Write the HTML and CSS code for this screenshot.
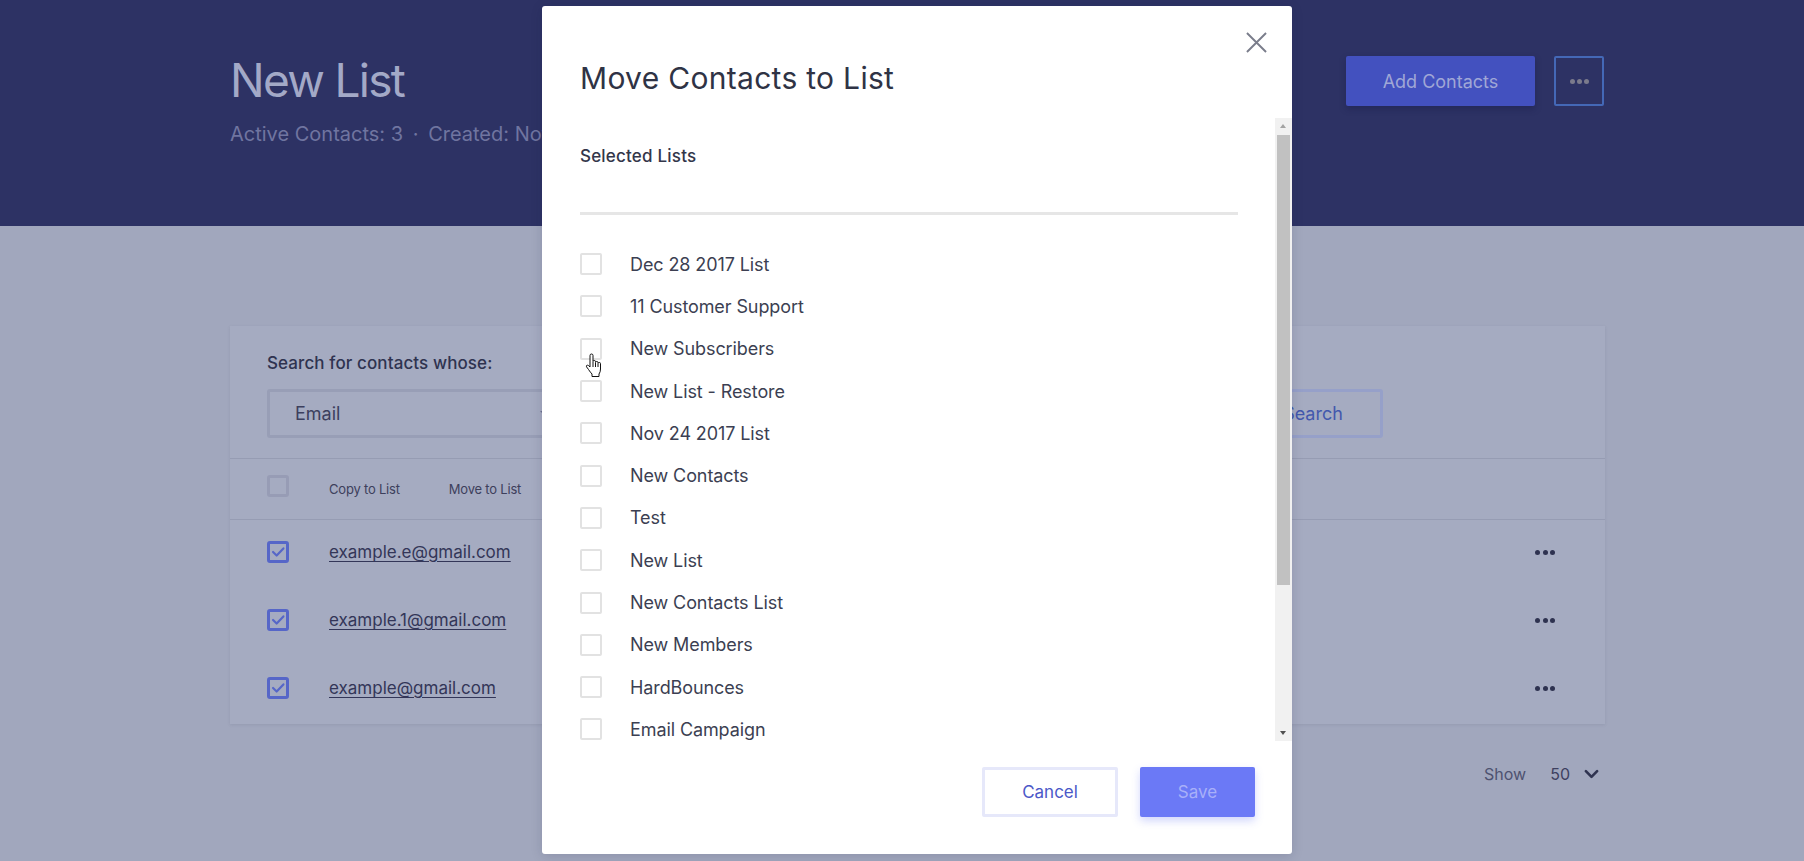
FILE: index.html
```html
<!DOCTYPE html>
<html lang="en">
<head>
<meta charset="utf-8">
<title>New List</title>
<link rel="stylesheet" href="styles.css">
</head>
<body>
<div class="page">
  <header class="hero">
    <div class="hero-inner">
      <div class="hero-text">
        <h1 class="hero-title">New List</h1>
        <div class="hero-meta">Active Contacts: 3 <span class="sep">·</span> Created: Nov 24 2017</div>
      </div>
      <div class="hero-actions">
        <button class="btn-add">Add Contacts</button>
        <button class="btn-more"><span class="dot"></span><span class="dot"></span><span class="dot"></span></button>
      </div>
    </div>
  </header>

  <main class="content">
    <section class="card">
      <div class="search">
        <div class="search-label">Search for contacts whose:</div>
        <div class="search-row">
          <div class="select">Email<span class="select-arrow"></span></div>
          <div class="search-input"></div>
          <button class="btn-search">Search</button>
        </div>
      </div>
      <div class="table-head">
        <span class="cb"></span>
        <span class="head-action">Copy to List</span>
        <span class="head-action">Move to List</span>
      </div>
      <div class="row">
        <span class="cb cb-checked"><svg viewBox="0 0 20 20" class="tick"><path d="M4.5 10l4 4L16 6"/></svg></span>
        <a class="email">example.e@gmail.com</a>
        <span class="row-dots"><i></i><i></i><i></i></span>
      </div>
      <div class="row">
        <span class="cb cb-checked"><svg viewBox="0 0 20 20" class="tick"><path d="M4.5 10l4 4L16 6"/></svg></span>
        <a class="email">example.1@gmail.com</a>
        <span class="row-dots"><i></i><i></i><i></i></span>
      </div>
      <div class="row">
        <span class="cb cb-checked"><svg viewBox="0 0 20 20" class="tick"><path d="M4.5 10l4 4L16 6"/></svg></span>
        <a class="email">example@gmail.com</a>
        <span class="row-dots"><i></i><i></i><i></i></span>
      </div>
    </section>
    <div class="pager">
      <span class="pager-show">Show</span>
      <span class="pager-num">50</span>
      <svg class="pager-chev" viewBox="0 0 16 10"><path d="M2 2l6 6 6-6"/></svg>
    </div>
  </main>
</div>

<div class="modal">
  <button class="modal-close"><svg viewBox="0 0 22 22"><path d="M1 1l20 20M21 1L1 21"/></svg></button>
  <h2 class="modal-title">Move Contacts to List</h2>
  <div class="modal-scroll">
    <div class="modal-body">
      <div class="selected-label">Selected Lists</div>
      <div class="selected-field"></div>
      <ul class="lists">
        <li><span class="mcb"></span>Dec 28 2017 List</li>
        <li><span class="mcb"></span>11 Customer Support</li>
        <li><span class="mcb"></span>New Subscribers</li>
        <li><span class="mcb"></span>New List - Restore</li>
        <li><span class="mcb"></span>Nov 24 2017 List</li>
        <li><span class="mcb"></span>New Contacts</li>
        <li><span class="mcb"></span>Test</li>
        <li><span class="mcb"></span>New List</li>
        <li><span class="mcb"></span>New Contacts List</li>
        <li><span class="mcb"></span>New Members</li>
        <li><span class="mcb"></span>HardBounces</li>
        <li><span class="mcb"></span>Email Campaign</li>
      </ul>
    </div>
    <div class="scrollbar">
      <span class="sb-up"></span>
      <span class="sb-thumb"></span>
      <span class="sb-track"></span>
      <span class="sb-down"></span>
    </div>
  </div>
  <div class="modal-footer">
    <button class="btn-cancel">Cancel</button>
    <button class="btn-save">Save</button>
  </div>
</div>

<svg class="cursor" viewBox="0 0 18 25"><path d="M5 2.5Q5 1 6.5 1Q8 1 8 2.5V8.5Q8 7.5 9.25 7.5Q10.5 7.5 10.5 8.5V9.5Q10.5 8.5 11.75 8.5Q13 8.5 13 9.5V10.5Q13 9.5 14.25 9.5Q15.5 9.5 15.5 10.5V16Q15.5 19 14 21V23.5H7V21Q5.5 19.5 3.5 16.5L1.5 13.8Q1 12.2 2.5 12.2Q3.6 12.2 5 14Z M10.5 10V14 M13 11V14 M8 9V14"/></svg>
</body>
</html>
```

FILE: styles.css
```css
* { box-sizing: border-box; }
html, body { margin: 0; padding: 0; }
body {
  width: 1804px;
  height: 861px;
  overflow: hidden;
  background: #a1a7bd;
  font-family: Inter, "Noto Sans", sans-serif;
  position: relative;
}
button { font-family: inherit; cursor: pointer; }

/* ---------- hero ---------- */
.hero {
  height: 226px;
  background: #2d3264;
}
.hero-inner {
  margin-left: 230px;
  width: 1375px;
  padding-top: 56px;
  display: flex;
  justify-content: space-between;
  align-items: flex-start;
}
.hero-title {
  margin: 1px 0 0 0;
  font-size: 46px;
  line-height: 46px;
  font-weight: 400;
  color: #a3a9c7;
  letter-spacing: -1.7px;
}
.hero-meta {
  margin-top: 19px;
  font-size: 20px;
  line-height: 24px;
  color: #7075a0;
}
.hero-meta .sep { margin: 0 4px; }
.hero-actions {
  display: flex;
  gap: 19px;
  margin-right: 1px;
}
.btn-add {
  width: 189px;
  height: 50px;
  border: none;
  border-radius: 2px;
  background: #4351bf;
  color: #a0a7d6;
  font-size: 18px;
  box-shadow: 0 3px 6px rgba(20, 24, 70, 0.35);
}
.btn-more {
  width: 50px;
  height: 50px;
  border: 2px solid #4468b6;
  border-radius: 2px;
  background: transparent;
  display: flex;
  align-items: center;
  justify-content: center;
  gap: 2px;
  padding: 0;
}
.btn-more .dot {
  width: 5px;
  height: 5px;
  border-radius: 50%;
  background: #7b7b8c;
}

/* ---------- content ---------- */
.content {
  margin-left: 230px;
  width: 1375px;
  padding-top: 100px;
}
.card {
  background: #a5abc1;
  box-shadow: 0 1px 3px rgba(60, 66, 100, 0.12);
}
.search {
  padding: 27px 37px 20px;
  border-bottom: 1px solid #969cb3;
}
.search-label {
  font-size: 17px;
  line-height: 20px;
  font-weight: 500;
  color: #2f3350;
  letter-spacing: 0.1px;
}
.search-row {
  margin-top: 16px;
  width: 1116px;
  display: flex;
  gap: 20px;
}
.select {
  width: 330px;
  height: 49px;
  border: 3px solid #989eb6;
  border-radius: 3px;
  padding-left: 25px;
  display: flex;
  align-items: center;
  font-size: 18px;
  color: #3c3f5e;
  position: relative;
}
.select-arrow {
  position: absolute;
  left: 270px;
  top: 19px;
  border-left: 5px solid transparent;
  border-right: 5px solid transparent;
  border-top: 5px solid #6e7290;
}
.search-input {
  flex: 1;
  height: 49px;
  border: 3px solid #989eb6;
  border-radius: 3px;
}
.btn-search {
  width: 140px;
  height: 49px;
  border: 3px solid #96a0c9;
  border-radius: 3px;
  background: transparent;
  color: #4358ad;
  font-size: 18px;
}
.table-head {
  height: 61px;
  padding: 0 37px;
  display: flex;
  align-items: center;
  border-bottom: 1px solid #969cb3;
}
.cb {
  width: 22px;
  height: 22px;
  border: 3px solid #979cb5;
  border-radius: 3px;
  flex: none;
  margin-right: 40px;
  margin-top: -6px;
}
.head-action {
  font-size: 13px;
  color: #3d405c;
  margin-right: 49px;
  letter-spacing: -0.2px;
}
.row {
  height: 68px;
  padding: 0 50px 0 37px;
  display: flex;
  align-items: center;
}
.row .cb { margin-top: -4px; }
.cb-checked {
  border-color: #5666c8;
  display: flex;
  align-items: center;
  justify-content: center;
}
.tick {
  width: 18px;
  height: 18px;
  flex: none;
  fill: none;
  stroke: #5666c8;
  stroke-width: 2.4;
  stroke-linecap: round;
  stroke-linejoin: round;
}
.email {
  font-size: 17px;
  color: #333658;
  text-decoration: underline;
  text-underline-offset: 3px;
  margin-top: -4px;
}
.row-dots {
  margin-left: auto;
  display: flex;
  gap: 2.5px;
  margin-top: -4px;
}
.row-dots i {
  width: 5px;
  height: 5px;
  border-radius: 50%;
  background: #2e3250;
}
.pager {
  margin-top: 40px;
  display: flex;
  justify-content: flex-end;
  align-items: center;
  padding-right: 6px;
  height: 20px;
}
.pager-show { font-size: 16px; color: #4e5270; }
.pager-num { font-size: 16px; color: #3d4060; margin-left: 24px; }
.pager-chev {
  width: 15px;
  height: 10px;
  margin-left: 14px;
  fill: none;
  stroke: #2f3350;
  stroke-width: 2.8;
  stroke-linecap: round;
  stroke-linejoin: round;
}

/* ---------- modal ---------- */
.modal {
  position: absolute;
  left: 542px;
  top: 6px;
  width: 750px;
  height: 848px;
  background: #ffffff;
  border-radius: 3px;
  display: flex;
  flex-direction: column;
  box-shadow: 0 2px 12px rgba(20, 24, 60, 0.15);
}
.modal-close {
  position: absolute;
  left: 704px;
  top: 26px;
  width: 21px;
  height: 21px;
  padding: 0;
  border: none;
  background: transparent;
}
.modal-close svg {
  display: block;
  width: 21px;
  height: 21px;
  fill: none;
  stroke: #7a7d8b;
  stroke-width: 2;
}
.modal-title {
  margin: 54px 0 0 38px;
  font-size: 30px;
  line-height: 36px;
  font-weight: 400;
  color: #2f3345;
  letter-spacing: 0.3px;
}
.modal-scroll {
  margin-top: 22px;
  height: 623px;
  display: flex;
  overflow: hidden;
}
.modal-body {
  flex: 1;
  padding: 28px 37px 0 38px;
  overflow: hidden;
}
.selected-label {
  font-size: 17px;
  line-height: 20px;
  font-weight: 500;
  color: #33364a;
  letter-spacing: 0.2px;
}
.selected-field {
  height: 49px;
  border-bottom: 3px solid #e6e6e6;
}
.lists {
  list-style: none;
  margin: 28px 0 0 0;
  padding: 0;
}
.lists li {
  height: 42.3px;
  display: flex;
  align-items: center;
  font-size: 18px;
  color: #3c3f52;
  letter-spacing: -0.1px;
}
.mcb {
  width: 22px;
  height: 22px;
  border: 2px solid #e2e2e2;
  border-radius: 2px;
  margin-right: 28px;
  flex: none;
}
.scrollbar {
  width: 17px;
  flex: none;
  background: #f1f1f1;
  display: flex;
  flex-direction: column;
  align-items: center;
}
.sb-up, .sb-down {
  height: 17px;
  width: 17px;
  flex: none;
  position: relative;
}
.sb-up::after, .sb-down::after {
  content: "";
  position: absolute;
  left: 5px;
  top: 6px;
  border-left: 3.5px solid transparent;
  border-right: 3.5px solid transparent;
}
.sb-up::after { border-bottom: 4px solid #a3a3a3; }
.sb-down::after { border-top: 4px solid #505050; top: 7px; }
.sb-thumb {
  width: 13px;
  height: 450px;
  background: #c1c1c1;
  flex: none;
}
.sb-track { flex: 1; }

.modal-footer {
  margin-top: 26px;
  padding-right: 37px;
  display: flex;
  justify-content: flex-end;
  gap: 22px;
}
.btn-cancel {
  width: 136px;
  height: 50px;
  border: 3px solid #e6e8fa;
  border-radius: 2px;
  background: #ffffff;
  color: #4b58c8;
  font-size: 17px;
}
.btn-save {
  width: 115px;
  height: 50px;
  border: none;
  border-radius: 2px;
  background: #6b79f6;
  color: #a8b0f9;
  font-size: 17px;
  box-shadow: 0 4px 8px rgba(107, 121, 246, 0.3);
}

/* mouse pointer captured in the screenshot */
.cursor {
  position: absolute;
  left: 585px;
  top: 353px;
  width: 18px;
  height: 25px;
  fill: #ffffff;
  stroke: #111111;
  stroke-width: 1;
  stroke-linejoin: round;
}
```
